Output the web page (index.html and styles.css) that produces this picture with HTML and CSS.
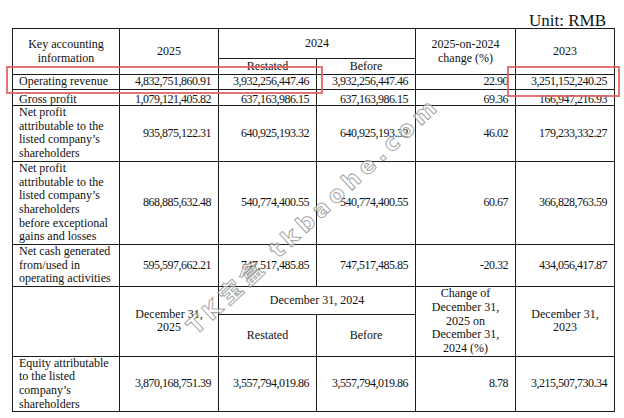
FILE: index.html
```html
<!DOCTYPE html>
<html>
<head>
<meta charset="utf-8">
<link rel="stylesheet" href="styles.css">
</head>
<body>
<div class="page">
  <div class="unit">Unit: RMB</div>
  <table class="kpi">
    <colgroup>
      <col class="c1"><col class="c2"><col class="c3"><col class="c4"><col class="c5"><col class="c6">
    </colgroup>
    <tr class="h-a">
      <th rowspan="2">Key accounting<br>information</th>
      <th rowspan="2">2025</th>
      <th colspan="2">2024</th>
      <th rowspan="2">2025-on-2024<br>change (%)</th>
      <th rowspan="2">2023</th>
    </tr>
    <tr class="h-b">
      <th class="sub">Restated</th>
      <th class="sub">Before</th>
    </tr>
    <tr class="r-op">
      <td class="lbl">Operating revenue</td>
      <td class="num">4,832,751,860.91</td>
      <td class="num">3,932,256,447.46</td>
      <td class="num">3,932,256,447.46</td>
      <td class="num">22.90</td>
      <td class="num">3,251,152,240.25</td>
    </tr>
    <tr class="r-gp">
      <td class="lbl">Gross profit</td>
      <td class="num">1,079,121,405.82</td>
      <td class="num">637,163,986.15</td>
      <td class="num">637,163,986.15</td>
      <td class="num">69.36</td>
      <td class="num">166,947,216.93</td>
    </tr>
    <tr>
      <td class="lbl">Net profit<br>attributable to the<br>listed company’s<br>shareholders</td>
      <td class="num">935,875,122.31</td>
      <td class="num">640,925,193.32</td>
      <td class="num">640,925,193.32</td>
      <td class="num">46.02</td>
      <td class="num">179,233,332.27</td>
    </tr>
    <tr>
      <td class="lbl">Net profit<br>attributable to the<br>listed company’s<br>shareholders<br>before exceptional<br>gains and losses</td>
      <td class="num">868,885,632.48</td>
      <td class="num">540,774,400.55</td>
      <td class="num">540,774,400.55</td>
      <td class="num">60.67</td>
      <td class="num">366,828,763.59</td>
    </tr>
    <tr>
      <td class="lbl">Net cash generated<br>from/used in<br>operating activities</td>
      <td class="num">595,597,662.21</td>
      <td class="num">747,517,485.85</td>
      <td class="num">747,517,485.85</td>
      <td class="num">-20.32</td>
      <td class="num">434,056,417.87</td>
    </tr>
    <tr class="d-a">
      <td rowspan="2"></td>
      <td rowspan="2" class="ctr">December 31,<br>2025</td>
      <td colspan="2" class="ctr">December 31, 2024</td>
      <td rowspan="2" class="ctr">Change of<br>December 31,<br>2025 on<br>December 31,<br>2024 (%)</td>
      <td rowspan="2" class="ctr">December 31,<br>2023</td>
    </tr>
    <tr class="d-b">
      <td class="ctr">Restated</td>
      <td class="ctr">Before</td>
    </tr>
    <tr>
      <td class="lbl">Equity attributable<br>to the listed<br>company’s<br>shareholders</td>
      <td class="num">3,870,168,751.39</td>
      <td class="num">3,557,794,019.86</td>
      <td class="num">3,557,794,019.86</td>
      <td class="num">8.78</td>
      <td class="num">3,215,507,730.34</td>
    </tr>
  </table>

  <div class="hl hl-left"></div>
  <div class="hl hl-right"></div>
  <div class="watermark">TK宝盒 tkbaohe.com</div>
</div>
</body>
</html>
```

FILE: styles.css
```css
html, body {
  margin: 0;
  padding: 0;
  background: #ffffff;
}

.page {
  position: relative;
  width: 624px;
  height: 418px;
  padding-left: 12px;
  box-sizing: border-box;
  font-family: "Liberation Serif", "Times New Roman", serif;
  color: #111;
  overflow: hidden;
}

.unit {
  width: 603px;
  height: 28px;
  box-sizing: border-box;
  padding-top: 12px;
  padding-right: 9px;
  text-align: right;
  font-size: 17px;
  line-height: 17px;
  font-family: "Liberation Serif", "Times New Roman", serif;
}

.kpi {
  border-collapse: collapse;
  table-layout: fixed;
  width: 603px;
  font-family: "Liberation Serif", "Times New Roman", serif;
  font-size: 12px;
  line-height: 13.7px;
  color: #111;
}

.c1 { width: 107px; }
.c2 { width: 99px; }
.c3 { width: 98px; }
.c4 { width: 99px; }
.c5 { width: 100px; }
.c6 { width: 99px; }

.kpi th,
.kpi td {
  border: 1px solid #1c1c1c;
  padding: 0;
  vertical-align: middle;
  font-weight: normal;
  font-family: "Liberation Serif", "Times New Roman", serif;
  font-size: 12px;
  line-height: 13.7px;
}

.kpi th {
  text-align: center;
}

.kpi .h-a th { height: 29px; }
.kpi .h-b th { height: 14px; }
.kpi .sub { padding-top: 1px; }

.kpi .r-op td { height: 14px; }
.kpi .r-gp td {
  height: 13px;
  line-height: 12px;
  padding-top: 2px;
}

.kpi .d-a td { height: 27px; }

.lbl {
  text-align: left;
  padding-left: 6px !important;
}

.num {
  text-align: right;
  padding-right: 7px !important;
  letter-spacing: -0.5px;
}

.ctr {
  text-align: center;
}

.hl {
  position: absolute;
  border: 2px solid rgba(226, 92, 92, 0.85);
  box-sizing: border-box;
}

.hl-left {
  left: 6px;
  top: 66px;
  width: 317px;
  height: 28px;
}

.hl-right {
  left: 507px;
  top: 66px;
  width: 113px;
  height: 31px;
}

.watermark {
  position: absolute;
  left: 312px;
  top: 214px;
  transform: translate(-50%, -50%) rotate(-43deg);
  white-space: nowrap;
  font-family: "DejaVu Sans", "Noto Sans CJK SC", sans-serif;
  font-weight: bold;
  font-size: 23px;
  letter-spacing: 5px;
  color: rgba(255, 255, 255, 0.6);
  -webkit-text-stroke: 1px rgba(120, 120, 120, 0.7);
}
```
